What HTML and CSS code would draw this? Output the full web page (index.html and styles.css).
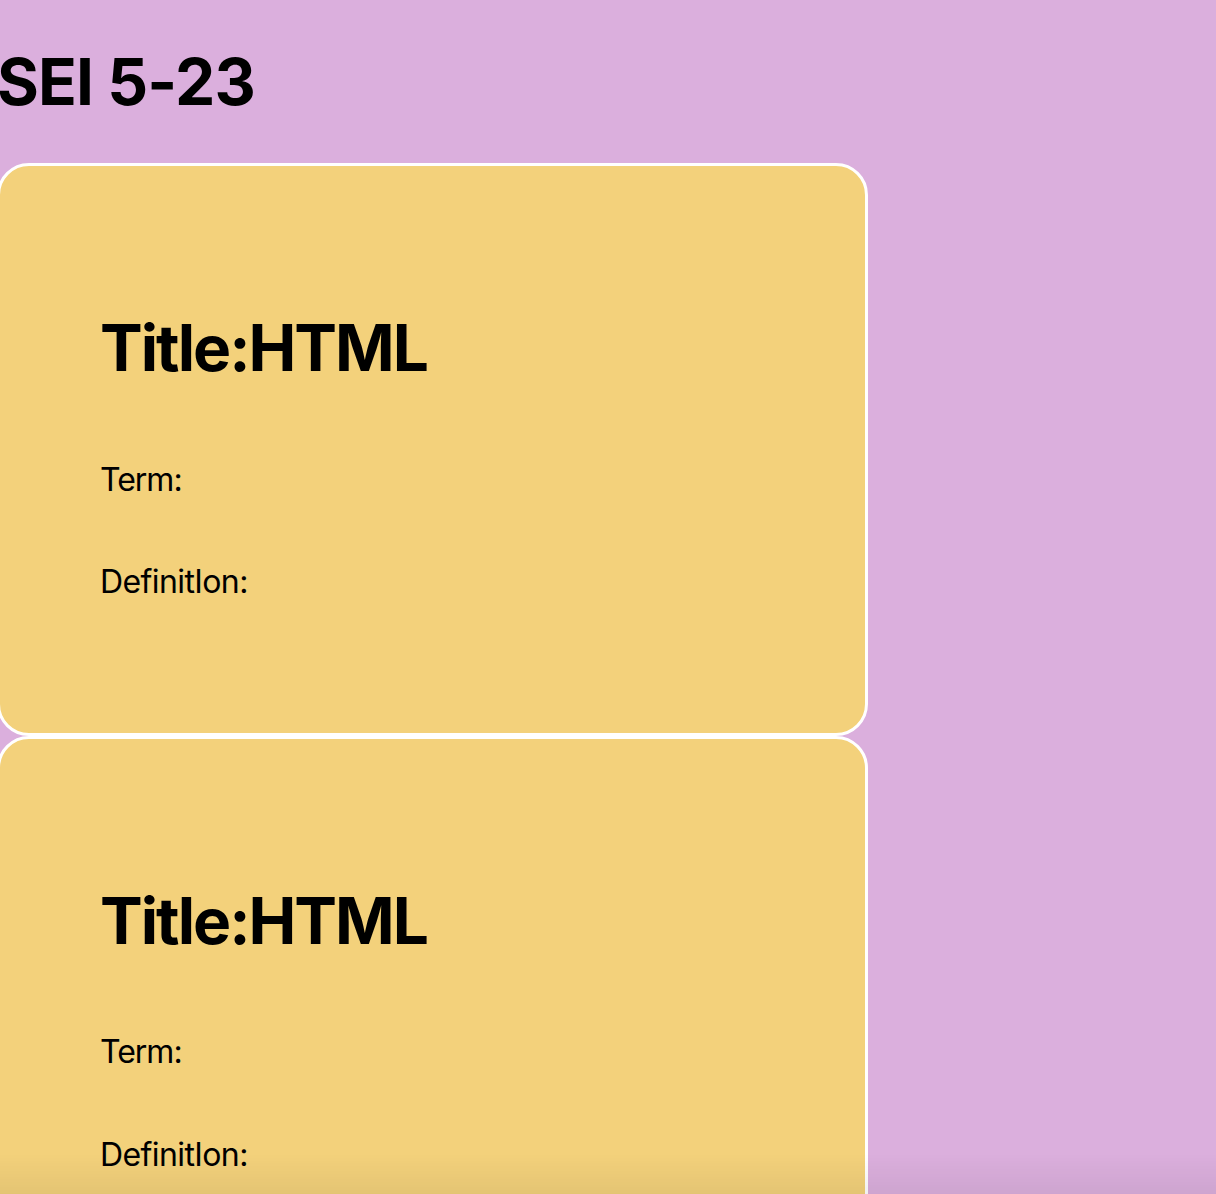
FILE: index.html
```html
<!DOCTYPE html>
<html lang="en">
<head>
<meta charset="utf-8">
<title>SEI 5-23</title>
<link rel="stylesheet" href="styles.css">
</head>
<body>
<main class="page">
  <h1 class="page-title">SEI 5-23</h1>
  <section class="card">
    <h1 class="card-title">Title:HTML</h1>
    <p class="card-term">Term:</p>
    <p class="card-def">DefinitIon:</p>
  </section>
  <section class="card">
    <h1 class="card-title">Title:HTML</h1>
    <p class="card-term">Term:</p>
    <p class="card-def">DefinitIon:</p>
  </section>
</main>
<div class="vignette"></div>
</body>
</html>
```

FILE: styles.css
```css
html, body {
  margin: 0;
  padding: 0;
}
body {
  background: #dbafdd;
  font-family: Inter, "Noto Sans", sans-serif;
  color: #000;
  overflow: hidden;
}
.page {
  margin-left: -3px;
  padding-top: 43px;
}
.page-title {
  font-size: 64px;
  font-weight: 700;
  line-height: normal;
  letter-spacing: -0.9px;
  margin: 0 0 43px 0;
}
.card {
  border: 3px solid #fff;
  border-radius: 32px;
  background: #f3d17b;
  padding: 100px;
  box-sizing: border-box;
  width: 871px;
}
.card-title {
  font-size: 64px;
  font-weight: 700;
  line-height: normal;
  letter-spacing: -2px;
  margin: 43px 0 0 0;
}
.card-term,
.card-def {
  font-size: 32px;
  font-weight: 400;
  line-height: normal;
}
.card-term {
  letter-spacing: -1px;
  margin: 73.5px 0 0 0;
}
.card-def {
  letter-spacing: -0.6px;
  margin: 63.25px 0 32px 0;
}
.vignette {
  position: fixed;
  left: 0;
  right: 0;
  bottom: 0;
  height: 40px;
  pointer-events: none;
  background: linear-gradient(to bottom, rgba(0,0,0,0), rgba(0,0,0,0.06));
}
```
